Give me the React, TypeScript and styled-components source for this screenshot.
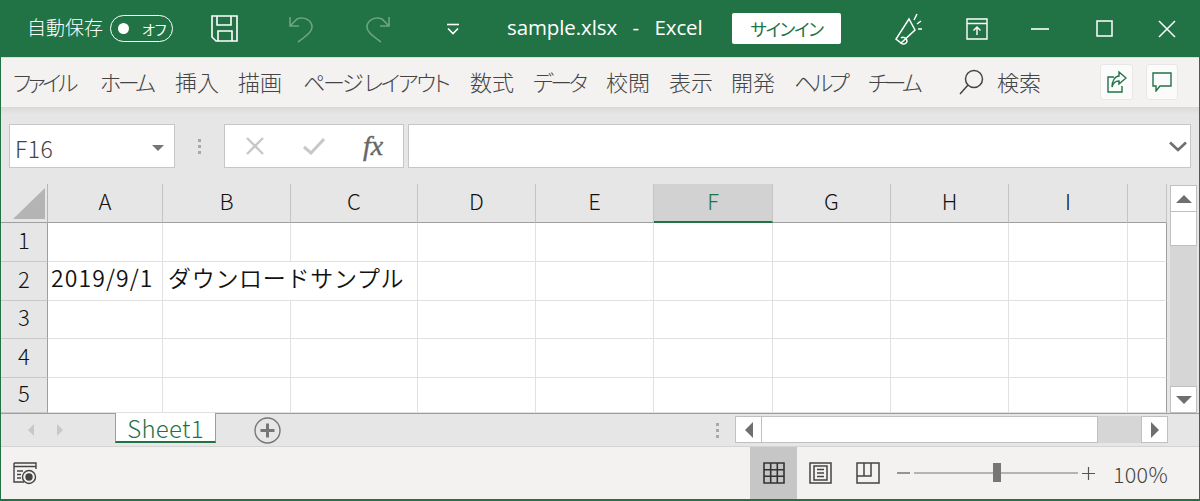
import React from "react";
import styled, { createGlobalStyle } from "styled-components";

const green = "#217346";
const jp = `"Noto Sans CJK JP", "Noto Sans", sans-serif`;

const GlobalStyle = createGlobalStyle`
  html, body { margin: 0; padding: 0; background: #fff; }
  body { font-family: ${jp}; overflow: hidden; }
`;

const Window = styled.div`
  width: 1200px;
  height: 501px;
  box-sizing: border-box;
  border: 1px solid ${green};
  border-top: none;
  border-bottom-width: 2px;
  display: flex;
  flex-direction: column;
  overflow: hidden;
`;

const TitleBar = styled.header`
  height: 57px;
  margin: 0 -1px;
  background: ${green};
  border-bottom: 1px solid #cfe0d6;
  display: flex;
  align-items: center;
  color: #fff;
  flex-shrink: 0;
`;

const Slot = styled.div<{ $x: number; $w: number }>`
  margin-left: ${(p) => p.$x}px;
  width: ${(p) => p.$w}px;
  display: flex;
  align-items: center;
  justify-content: center;
  flex-shrink: 0;
`;

const AutoSave = styled.span`
  margin: 0 0 4px 27px;
  width: 77px;
  font-size: 19px;
  font-weight: 300;
  white-space: nowrap;
`;

const Toggle = styled.div`
  margin-left: 6px;
  width: 63px;
  height: 27px;
  box-sizing: border-box;
  border: 1px solid #fff;
  border-radius: 14px;
  display: flex;
  align-items: center;
  padding-left: 7px;
  gap: 13px;
  font-size: 14px;
  font-feature-settings: "palt";
  flex-shrink: 0;
`;

const Knob = styled.i`
  width: 11px;
  height: 11px;
  background: #fff;
  border-radius: 50%;
`;

const FileName = styled.div`
  margin: 0 0 4px 47px;
  width: 196px;
  font-family: "Open Sans", sans-serif;
  font-size: 20.5px;
  letter-spacing: -0.1px;
  word-spacing: 2.5px;
  white-space: pre;
  flex-shrink: 0;
`;

const SignIn = styled.button`
  margin-left: 29px;
  width: 109px;
  height: 31px;
  padding: 0;
  border: none;
  border-radius: 2px;
  background: #fff;
  color: ${green};
  font-family: ${jp};
  font-size: 17.5px;
  letter-spacing: -1.2px;
  font-feature-settings: "palt";
  flex-shrink: 0;
`;

const Ribbon = styled.nav`
  height: 49px;
  box-sizing: border-box;
  background: #f3f2f1;
  display: flex;
  align-items: center;
  flex-shrink: 0;
  padding: 0 0 2px 12px;
  color: #444;
`;

const Tab = styled.span<{ $w: number; $sp?: number; $x?: number }>`
  width: ${(p) => p.$w}px;
  margin: 0 0 2px ${(p) => p.$x ?? 0}px;
  flex-shrink: 0;
  font-size: 22px;
  font-weight: 300;
  white-space: pre;
  font-feature-settings: "palt";
  letter-spacing: ${(p) => p.$sp ?? 0}px;
`;

const RibbonIcon = styled.div<{ $x: number; $w: number }>`
  margin-left: ${(p) => p.$x}px;
  width: ${(p) => p.$w}px;
  height: 36px;
  background: #fbfbfb;
  border: 1px solid #e8e7e6;
  border-radius: 3px;
  box-sizing: border-box;
  display: flex;
  align-items: center;
  justify-content: center;
  flex-shrink: 0;
`;

const FormulaArea = styled.section`
  height: 77px;
  box-sizing: border-box;
  padding: 17px 8px 16px 8px;
  background: linear-gradient(#d8d8d8 0, #e6e6e6 7px);
  display: flex;
  flex-shrink: 0;
`;

const NameBox = styled.div`
  width: 166px;
  box-sizing: border-box;
  background: #fff;
  border: 1px solid #c6c6c6;
  display: flex;
  align-items: center;
  justify-content: space-between;
  padding: 3px 10px 0 5px;
  font-size: 23px;
  font-weight: 300;
  letter-spacing: 0.5px;
  color: #444;
`;

const Grip = styled.div`
  width: 49px;
  display: flex;
  flex-direction: column;
  align-items: center;
  justify-content: center;
  gap: 3px;
  & > i {
    width: 3px;
    height: 3px;
    background: #a8a8a8;
  }
`;

const FxBox = styled.div`
  width: 180px;
  box-sizing: border-box;
  background: #fff;
  border: 1px solid #c6c6c6;
  display: flex;
  align-items: center;
  padding-left: 20px;
  gap: 38px;
`;

const FxLabel = styled.span`
  font-family: "Liberation Serif", serif;
  font-style: italic;
  font-size: 28px;
  color: #666;
  -webkit-text-stroke: 0.4px #666;
  line-height: 1;
`;

const FormulaInput = styled.div`
  margin-left: 4px;
  flex: 1;
  background: #fff;
  border: 1px solid #c6c6c6;
  display: flex;
  align-items: center;
  justify-content: flex-end;
  padding-right: 3px;
`;

const SheetArea = styled.section`
  height: 229px;
  display: flex;
  background: #e6e6e6;
  flex-shrink: 0;
`;

const SheetGrid = styled.div`
  width: 1166px;
  display: grid;
  grid-template-columns: 47px 115px 128px 127px 118px 118px 119px 118px 118px 119px 39px;
  grid-template-rows: 39px 39px 39px 38px 39px 35px;
  flex-shrink: 0;
`;

const Corner = styled.div`
  border-right: 1px solid #b5b5b5;
  border-bottom: 1px solid #9e9e9e;
  display: flex;
  padding: 4px 0 0 12px;
`;

const ColHead = styled.div<{ $active?: boolean }>`
  box-sizing: border-box;
  padding-bottom: 6px;
  line-height: 1;
  background: ${(p) => (p.$active ? "#d2d2d2" : "#e6e6e6")};
  color: ${(p) => (p.$active ? green : "#111")};
  border-bottom: ${(p) => (p.$active ? `2px solid ${green}` : "1px solid #9e9e9e")};
  border-right: 1px solid #c4c4c4;
  display: flex;
  align-items: center;
  justify-content: center;
  font-size: 22px;
  font-weight: 300;
`;

const RowHead = styled.div`
  box-sizing: border-box;
  padding-bottom: 7px;
  line-height: 1;
  border-right: 1px solid #9e9e9e;
  border-bottom: 1px solid #c8c8c8;
  color: #111;
  display: flex;
  align-items: center;
  justify-content: center;
  font-size: 22px;
  font-weight: 300;
`;

const Cell = styled.div<{ $open?: boolean; $last?: boolean }>`
  background: #fff;
  box-sizing: border-box;
  border-bottom: 1px solid #e1e1e1;
  border-right: ${(p) => (p.$last ? "1px solid #9e9e9e" : p.$open ? "none" : "1px solid #e1e1e1")};
  display: flex;
  align-items: center;
  padding: 0 0 8px 3px;
  line-height: 1;
  min-width: 0;
  font-size: 23px;
  font-weight: 350;
  color: #111;
  white-space: nowrap;
  letter-spacing: 1.1px;
`;

const Overflowing = styled.span`
  margin-left: 2px;
  letter-spacing: 0.7px;
  position: relative;
  z-index: 1;
`;

const VScroll = styled.div`
  margin-left: 3px;
  width: 27px;
  display: flex;
  flex-direction: column;
  padding-top: 1px;
`;

const ScrollBtn = styled.div`
  width: 27px;
  height: 27px;
  box-sizing: border-box;
  background: #fff;
  border: 1px solid #c0c0c0;
  display: flex;
  align-items: center;
  justify-content: center;
  flex-shrink: 0;
`;

const VTrack = styled.div`
  flex: 1;
  background: #d6d6d6;
`;

const VThumb = styled.div`
  height: 34px;
  box-sizing: border-box;
  background: #fff;
  border: 1px solid #c0c0c0;
  border-top: none;
`;

const TabBar = styled.section`
  height: 34px;
  box-sizing: border-box;
  background: #e6e6e6;
  border-top: 1px solid #9e9e9e;
  border-bottom: 1px solid #d4d4d4;
  display: flex;
  align-items: flex-start;
  flex-shrink: 0;
`;

const SheetNav = styled.div`
  width: 114px;
  height: 32px;
  display: flex;
  align-items: center;
  padding-left: 27px;
  box-sizing: border-box;
  gap: 23px;
  flex-shrink: 0;
`;

const SheetTab = styled.div`
  width: 101px;
  height: 30px;
  margin-top: -1px;
  box-sizing: border-box;
  background: #fff;
  color: ${green};
  border-left: 1px solid #9e9e9e;
  border-right: 1px solid #9e9e9e;
  border-bottom: 2px solid ${green};
  display: flex;
  align-items: center;
  justify-content: center;
  font-size: 24px;
  font-weight: 300;
  letter-spacing: 0.3px;
  flex-shrink: 0;
`;

const AddSheet = styled.div`
  margin-left: 38px;
  width: 28px;
  height: 32px;
  display: flex;
  align-items: center;
  flex-shrink: 0;
`;

const HGrip = styled(Grip)`
  margin-left: 421px;
  width: 29px;
  height: 32px;
`;

const HScroll = styled.div`
  margin-top: 2px;
  margin-left: 3px;
  width: 433px;
  height: 27px;
  display: flex;
  flex-shrink: 0;
`;

const HThumb = styled.div`
  width: 336px;
  box-sizing: border-box;
  background: #fff;
  border: 1px solid #c0c0c0;
  border-left: none;
`;

const HTrack = styled.div`
  flex: 1;
  background: #d6d6d6;
`;

const StatusBar = styled.footer`
  flex: 1;
  background: #f3f2f1;
  display: flex;
  align-items: center;
  color: #444;
`;

const ViewBtn = styled.div<{ $active?: boolean }>`
  width: 47px;
  height: 100%;
  background: ${(p) => (p.$active ? "#c6c6c6" : "transparent")};
  display: flex;
  align-items: center;
  justify-content: center;
  flex-shrink: 0;
`;

const Zoom = styled.div`
  margin-left: 6px;
  display: flex;
  align-items: center;
  flex-shrink: 0;
`;

const Slider = styled.div`
  position: relative;
  margin: 0 4px;
  width: 164px;
  height: 2px;
  background: #b4b3b2;
`;

const SliderThumb = styled.i`
  position: absolute;
  left: 79px;
  top: -9px;
  width: 8px;
  height: 19px;
  background: #767676;
`;

const ZoomLevel = styled.span`
  margin-left: 18px;
  font-size: 21.5px;
  font-weight: 300;
  letter-spacing: 0.3px;
  white-space: nowrap;
`;

const tabs: [string, number, number?][] = [
  ["ファイル", 87, -3.6],
  ["ホーム", 75, -3.5],
  ["挿入", 63],
  ["描画", 65],
  ["ページ レイアウト", 167, -2.3],
  ["数式", 63],
  ["データ", 73, -3.3],
  ["校閲", 63],
  ["表示", 62],
  ["開発", 63],
  ["ヘルプ", 74, -3.8],
  ["チーム", 92, -3.5],
];

const columns = ["A", "B", "C", "D", "E", "F", "G", "H", "I", ""];
const rows = [1, 2, 3, 4, 5];

const Tri = ({ dir, color = "#6f6f6f", size = 8 }: { dir: "up" | "down" | "left" | "right"; color?: string; size?: number }) => {
  const pts = { up: "0,8 8,0 16,8", down: "0,0 16,0 8,8", left: "8,0 8,16 0,8", right: "0,0 0,16 8,8" }[dir];
  const vertical = dir === "up" || dir === "down";
  return (
    <svg width={vertical ? size * 2 : size} height={vertical ? size : size * 2} viewBox={vertical ? "0 0 16 8" : "0 0 8 16"}>
      <polygon points={pts} fill={color} />
    </svg>
  );
};

const cellContent = (row: number, col: number) => {
  if (row === 2 && col === 0) return "2019/9/1";
  if (row === 2 && col === 1) return <Overflowing>ダウンロードサンプル</Overflowing>;
  return null;
};

export default function App() {
  return (
    <Window>
      <GlobalStyle />
      <TitleBar>
        <AutoSave>自動保存</AutoSave>
        <Toggle>
          <Knob />
          オフ
        </Toggle>
        <Slot $x={38} $w={27}>
          <svg width="27" height="27" viewBox="0 0 27 27" fill="none" stroke="#fff" strokeWidth="1.6">
            <path d="M1 1H26V26H5L1 22Z" />
            <path d="M6 1V10H20V1M7 26V16H21V26" />
          </svg>
        </Slot>
        <Slot $x={50} $w={26}>
          <svg width="26" height="28" viewBox="0 0 26 28" fill="none" stroke="#6ba585" strokeWidth="1.6">
            <path d="M2 2V11H11M2 11L9 4C17 1 24 6 24 12C24 16 21 19 10 27" />
          </svg>
        </Slot>
        <Slot $x={51} $w={26}>
          <svg width="26" height="28" viewBox="0 0 26 28" fill="none" stroke="#6ba585" strokeWidth="1.6">
            <path d="M24 2V11H15M24 11L17 4C9 1 2 6 2 12C2 16 5 19 16 27" />
          </svg>
        </Slot>
        <Slot $x={55} $w={14}>
          <svg width="14" height="12" viewBox="0 0 14 12" fill="none" stroke="#fff" strokeWidth="1.6">
            <path d="M1 1.5H13" />
            <path d="M2 5.5L7 10.5L12 5.5" />
          </svg>
        </Slot>
        <FileName>sample.xlsx  -  Excel</FileName>
        <SignIn>サインイン</SignIn>
        <Slot $x={53} $w={28}>
          <svg width="28" height="34" viewBox="0 0 28 34" fill="none" stroke="#fff" strokeWidth="1.5">
            <path d="M15 7L2 27L7 31L21 18Z" />
            <path d="M7 26C9 24 13 26 13 29C13 32 9 33 7 31" />
            <path d="M20 8L23 2M23 12L27 9M24 17H28" />
          </svg>
        </Slot>
        <Slot $x={44} $w={22}>
          <svg width="22" height="22" viewBox="0 0 22 22" fill="none" stroke="#fff" strokeWidth="1.4">
            <path d="M1 1H21V21H1ZM1 5.5H21" />
            <path d="M11 17V9M7.5 12.5L11 9L14.5 12.5" />
          </svg>
        </Slot>
        <Slot $x={43} $w={18}>
          <svg width="18" height="2" viewBox="0 0 18 2">
            <path d="M0 1H18" stroke="#fff" strokeWidth="1.6" />
          </svg>
        </Slot>
        <Slot $x={47} $w={17}>
          <svg width="17" height="17" viewBox="0 0 17 17" fill="none" stroke="#fff" strokeWidth="1.5">
            <rect x="1" y="1" width="15" height="15" />
          </svg>
        </Slot>
        <Slot $x={45} $w={18}>
          <svg width="18" height="18" viewBox="0 0 18 18" fill="none" stroke="#fff" strokeWidth="1.5">
            <path d="M1 1L17 17M17 1L1 17" />
          </svg>
        </Slot>
      </TitleBar>
      <Ribbon>
        {tabs.map(([label, w, sp]) => (
          <Tab key={label} $w={w} $sp={sp}>
            {label}
          </Tab>
        ))}
        <Slot $x={-1} $w={25}>
          <svg width="25" height="26" viewBox="0 0 25 26" fill="none" stroke="#444" strokeWidth="1.5">
            <circle cx="15" cy="10" r="8.5" />
            <path d="M9 16L1 25" />
          </svg>
        </Slot>
        <Tab $w={44} $x={13}>
          検索
        </Tab>
        <RibbonIcon $x={59} $w={33}>
          <svg width="20" height="22" viewBox="0 0 20 22" fill="none" stroke={green} strokeWidth="1.4">
            <path d="M7 6H1V21H15V15" />
            <path d="M12 1L19 7L12 13V10C8 10 6 12 5 16C5 10 8 5 12 5Z" />
          </svg>
        </RibbonIcon>
        <RibbonIcon $x={13} $w={32}>
          <svg width="20" height="20" viewBox="0 0 20 20" fill="none" stroke={green} strokeWidth="1.4">
            <path d="M1 1H19V14H8L4 19V14H1Z" />
          </svg>
        </RibbonIcon>
      </Ribbon>
      <FormulaArea>
        <NameBox>
          F16
          <Tri dir="down" color="#757575" size={6} />
        </NameBox>
        <Grip>
          <i />
          <i />
          <i />
        </Grip>
        <FxBox>
          <svg width="20" height="20" viewBox="0 0 20 20" fill="none" stroke="#c8c8c8" strokeWidth="2.4">
            <path d="M2 2L18 18M18 2L2 18" />
          </svg>
          <svg width="22" height="18" viewBox="0 0 22 18" fill="none" stroke="#c8c8c8" strokeWidth="3">
            <path d="M1 10L8 16L21 2" />
          </svg>
          <FxLabel>fx</FxLabel>
        </FxBox>
        <FormulaInput>
          <svg width="18" height="11" viewBox="0 0 18 11" fill="none" stroke="#6f6f6f" strokeWidth="2.6">
            <path d="M1 1.5L9 9L17 1.5" />
          </svg>
        </FormulaInput>
      </FormulaArea>
      <SheetArea>
        <SheetGrid>
          <Corner>
            <svg width="32" height="31" viewBox="0 0 32 31">
              <polygon points="32,0 32,31 0,31" fill="#b4b4b4" />
            </svg>
          </Corner>
          {columns.map((c, i) => (
            <ColHead key={i} $active={c === "F"}>
              {c}
            </ColHead>
          ))}
          {rows.map((r) => (
            <React.Fragment key={r}>
              <RowHead>{r}</RowHead>
              {columns.map((_, i) => (
                <Cell key={i} $open={r === 2 && i === 1} $last={i === columns.length - 1}>
                  {cellContent(r, i)}
                </Cell>
              ))}
            </React.Fragment>
          ))}
        </SheetGrid>
        <VScroll>
          <ScrollBtn>
            <Tri dir="up" />
          </ScrollBtn>
          <VThumb />
          <VTrack />
          <ScrollBtn>
            <Tri dir="down" />
          </ScrollBtn>
        </VScroll>
      </SheetArea>
      <TabBar>
        <SheetNav>
          <Tri dir="left" color="#c8c8c8" size={6} />
          <Tri dir="right" color="#c8c8c8" size={6} />
        </SheetNav>
        <SheetTab>Sheet1</SheetTab>
        <AddSheet>
          <svg width="27" height="27" viewBox="0 0 27 27" fill="none" stroke="#767676">
            <circle cx="13.5" cy="13.5" r="12.5" strokeWidth="1.4" />
            <path d="M6.5 13.5H20.5M13.5 6.5V20.5" strokeWidth="3" />
          </svg>
        </AddSheet>
        <HGrip>
          <i />
          <i />
          <i />
        </HGrip>
        <HScroll>
          <ScrollBtn>
            <Tri dir="left" />
          </ScrollBtn>
          <HThumb />
          <HTrack />
          <ScrollBtn>
            <Tri dir="right" />
          </ScrollBtn>
        </HScroll>
      </TabBar>
      <StatusBar>
        <Slot $x={12} $w={24}>
          <svg width="24" height="23" viewBox="0 0 24 23" fill="none" stroke="#444" strokeWidth="1.4">
            <path d="M1 1H23V7M1 4.5H23M11 20H1V1" />
            <path d="M4 9H10M4 12.5H8M4 16H8" />
            <circle cx="16" cy="15" r="6.5" />
            <circle cx="16" cy="15" r="3" fill="#444" />
          </svg>
        </Slot>
        <Slot $x={713} $w={0} />
        <ViewBtn $active>
          <svg width="22" height="22" viewBox="0 0 22 22" fill="#c6c6c6" stroke="#333" strokeWidth="1.6">
            <path d="M1 1H21V21H1ZM1 7.7H21M1 14.3H21M7.7 1V21M14.3 1V21" />
          </svg>
        </ViewBtn>
        <ViewBtn>
          <svg width="23" height="22" viewBox="0 0 23 22" fill="none" stroke="#444" strokeWidth="1.5">
            <path d="M1 1H22V21H1ZM5 4H18V18H5ZM8 7.5H15M8 11H15M8 14.5H15" />
          </svg>
        </ViewBtn>
        <ViewBtn>
          <svg width="24" height="22" viewBox="0 0 24 22" fill="none" stroke="#444" strokeWidth="1.5">
            <path d="M1 1H23V21H1ZM1 14H15V1M8 1V14" />
          </svg>
        </ViewBtn>
        <Zoom>
          <svg width="13" height="2" viewBox="0 0 13 2">
            <path d="M0 1H13" stroke="#555" strokeWidth="1.2" />
          </svg>
          <Slider>
            <SliderThumb />
          </Slider>
          <svg width="13" height="13" viewBox="0 0 13 13">
            <path d="M0 6.5H13M6.5 0V13" stroke="#555" strokeWidth="1.2" />
          </svg>
        </Zoom>
        <ZoomLevel>100%</ZoomLevel>
      </StatusBar>
    </Window>
  );
}
